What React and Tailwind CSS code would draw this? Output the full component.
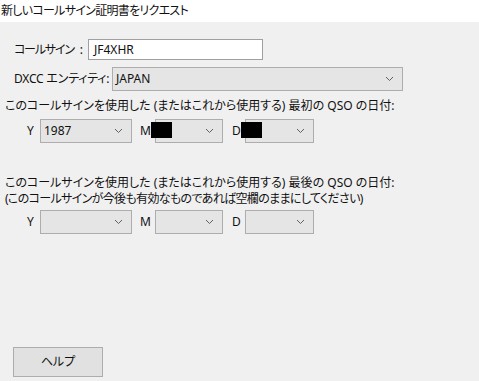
import React from 'react';

const font = "font-['Segoe_UI','Noto_Sans','Noto_Sans_CJK_JP',sans-serif] [font-feature-settings:'palt']";

const Chevron = () => (
  <svg width="9" height="6" viewBox="0 0 9 6" className="text-[#606060]">
    <polyline points="1,1 4.5,4.5 8,1" fill="none" stroke="currentColor" strokeWidth="1" />
  </svg>
);

const Combo = ({ value, width, redacted }) => (
  <div className={`relative h-[24px] ${width} flex items-center justify-between border border-[#adadad] bg-[#e5e5e5] pl-[3px] pr-[8px]`}>
    <span className="text-[12px] text-[#111]">{value}</span>
    <Chevron />
    {redacted && <div className="absolute left-[-5px] top-[2px] h-[16px] w-[21px] bg-black" />}
  </div>
);

const DateRow = ({ year, redacted }) => (
  <div className="flex items-center h-[24px] pl-[27px] text-[12px] text-[#111]">
    <span className="w-[13px]">Y</span>
    <Combo value={year} width="w-[92px]" />
    <span className="ml-[8px] w-[15px]">M</span>
    <Combo width="w-[68px]" redacted={redacted} />
    <span className="ml-[9px] w-[13px]">D</span>
    <Combo width="w-[69px]" redacted={redacted} />
  </div>
);

export default function App() {
  return (
    <div className={`w-[479px] h-[381px] bg-[#f0f0f0] flex flex-col ${font}`}>
      <div className="h-[22px] bg-white flex items-center pl-[1px] text-[12px] tracking-[-0.7px] text-[#111]">
        新しいコールサイン証明書をリクエスト
      </div>

      <div className="flex-1 flex flex-col">
        <div className="mt-[17px] flex items-center h-[21px] pl-[14px] text-[12px] text-[#111]">
          <span className="w-[74px] whitespace-nowrap">
            <span className="tracking-[-1.2px]">コールサイン</span>
            <span className="ml-[6px]">:</span>
          </span>
          <div className="w-[175px] h-[21px] bg-white border border-[#a0a0a0] flex items-center pl-[5px]">JF4XHR</div>
        </div>

        <div className="mt-[7px] flex items-center h-[24px] pl-[14px] text-[12px] text-[#111]">
          <span className="w-[98px] whitespace-nowrap tracking-[-0.2px]">DXCC エンティティ:</span>
          <Combo value="JAPAN" width="w-[291px]" />
        </div>

        <p className="mt-[7px] pl-[5px] text-[12px] leading-[16px] text-[#111]">
          このコールサインを使用した (またはこれから使用する) 最初の QSO の日付:
        </p>
        <div className="mt-[5px]">
          <DateRow year="1987" redacted />
        </div>

        <div className="mt-[32px] pl-[5px] text-[12px] leading-[16px] text-[#111]">
          <p>このコールサインを使用した (またはこれから使用する) 最後の QSO の日付:</p>
          <p className="tracking-[-0.66px]">(このコールサインが今後も有効なものであれば空欄のままにしてください)</p>
        </div>
        <div className="mt-[3px]">
          <DateRow />
        </div>

        <div className="flex-1" />
        <div className="pl-[13px] pb-[4px]">
          <button className="w-[90px] h-[30px] bg-[#e1e1e1] border border-[#adadad] text-[12px] text-[#111]">
            ヘルプ
          </button>
        </div>
      </div>
    </div>
  );
}
